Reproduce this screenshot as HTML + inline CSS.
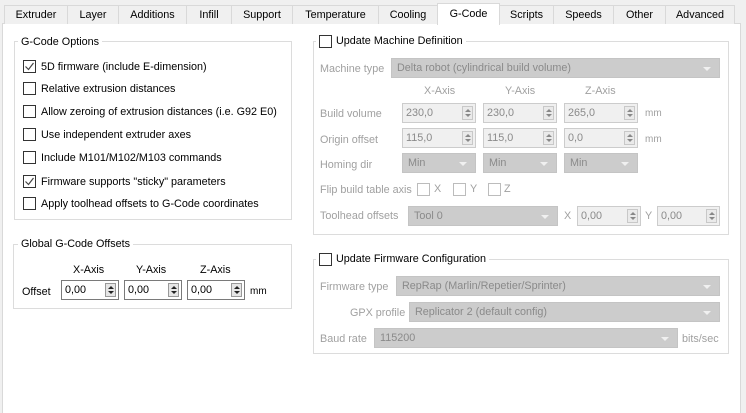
<!DOCTYPE html><html><head><style>
*{box-sizing:border-box}
html,body{margin:0;width:746px;height:413px;overflow:hidden}
body{background:#f0f0f0;font-family:"Liberation Sans",sans-serif;font-size:10.8px;color:#000;position:relative}
.a{position:absolute;white-space:nowrap;margin-top:2px}
.tab{position:absolute;top:5px;height:19px;border:1px solid #d9d9d9;border-bottom:none;background:#f0f0f0;text-align:center;line-height:19px}
.panel{position:absolute;left:2px;top:23px;width:739px;height:392px;background:#fff;border:1px solid #d9d9d9}
.grp{position:absolute;border:1px solid #dcdcdc}
.gt{position:absolute;background:#fff;padding:0 3px;line-height:16px}
.cb{position:absolute;width:13px;height:13px;border:1px solid #333;background:#fff}
.cbd{border-color:#bcbcbc}
.d{color:#a0a0a0}
.combo{position:absolute;height:20px;background:#cccccc;border:1px solid #c4c4c4;color:#8a8a8a;padding-left:5px;line-height:19px}
.combo:after{content:"";position:absolute;right:8px;top:8px;border-left:4px solid transparent;border-right:4px solid transparent;border-top:4px solid #f0f0f0}
.spin{position:absolute;height:20px;background:#f0f0f0;border:1px solid #ccc;color:#8a8a8a;padding-left:3px;line-height:19px}
.spin.e{background:#fff;border-color:#7a7a7a;color:#000}
.spin i{position:absolute;right:2px;top:2px;width:11px;height:14px;border:1px solid #c8c8c8;background:#eaeaea}
.spin.e i{border-color:#999;background:#e6e6e6}
.spin i:before{content:"";position:absolute;left:2px;top:2px;border-left:3px solid transparent;border-right:3px solid transparent;border-bottom:3px solid #888}
.spin i:after{content:"";position:absolute;left:2px;top:7px;border-left:3px solid transparent;border-right:3px solid transparent;border-top:3px solid #888}
.spin.e i:before{border-bottom-color:#222}.spin.e i:after{border-top-color:#222}
</style></head><body>
<div class="panel"></div>
<div class="tab" style="left:4px;width:64px">Extruder</div>
<div class="tab" style="left:67px;width:52px">Layer</div>
<div class="tab" style="left:118px;width:69px">Additions</div>
<div class="tab" style="left:186px;width:46px">Infill</div>
<div class="tab" style="left:231px;width:62px">Support</div>
<div class="tab" style="left:292px;width:87px">Temperature</div>
<div class="tab" style="left:378px;width:60px">Cooling</div>
<div class="tab" style="left:437px;top:3px;width:63px;height:22px;background:#fff;line-height:20px">G-Code</div>
<div class="tab" style="left:499px;width:55px">Scripts</div>
<div class="tab" style="left:553px;width:61px">Speeds</div>
<div class="tab" style="left:613px;width:53px">Other</div>
<div class="tab" style="left:665px;width:70px">Advanced</div>

<div class="grp" style="left:14px;top:41px;width:278px;height:179px"></div>
<div class="gt" style="left:18px;top:34px">G-Code Options</div>
<div class="cb" style="left:23px;top:60px"><svg width="11" height="11" style="position:absolute;left:0;top:0"><path d="M1.5 5.5 L4.5 8.5 L9.5 2" stroke="#444" stroke-width="1.2" fill="none"/></svg></div>
<div class="a" style="left:41px;top:59px">5D firmware (include E-dimension)</div>
<div class="cb" style="left:23px;top:82px"></div><div class="a" style="left:41px;top:81px">Relative extrusion distances</div>
<div class="cb" style="left:23px;top:105px"></div><div class="a" style="left:41px;top:104px">Allow zeroing of extrusion distances (i.e. G92 E0)</div>
<div class="cb" style="left:23px;top:128px"></div><div class="a" style="left:41px;top:127px">Use independent extruder axes</div>
<div class="cb" style="left:23px;top:151px"></div><div class="a" style="left:41px;top:150px">Include M101/M102/M103 commands</div>
<div class="cb" style="left:23px;top:175px"><svg width="11" height="11" style="position:absolute;left:0;top:0"><path d="M1.5 5.5 L4.5 8.5 L9.5 2" stroke="#444" stroke-width="1.2" fill="none"/></svg></div>
<div class="a" style="left:41px;top:174px">Firmware supports "sticky" parameters</div>
<div class="cb" style="left:23px;top:197px"></div><div class="a" style="left:41px;top:196px">Apply toolhead offsets to G-Code coordinates</div>

<div class="grp" style="left:13px;top:244px;width:279px;height:65px"></div>
<div class="gt" style="left:18px;top:236px">Global G-Code Offsets</div>
<div class="a" style="left:73px;top:262px">X-Axis</div>
<div class="a" style="left:136px;top:262px">Y-Axis</div>
<div class="a" style="left:200px;top:262px">Z-Axis</div>
<div class="a" style="left:22px;top:284px">Offset</div>
<div class="spin e" style="left:61px;top:280px;width:58px">0,00<i></i></div>
<div class="spin e" style="left:124px;top:280px;width:58px">0,00<i></i></div>
<div class="spin e" style="left:187px;top:280px;width:58px">0,00<i></i></div>
<div class="a" style="left:250px;top:284px;font-size:10px">mm</div>

<div class="grp" style="left:313px;top:41px;width:416px;height:194px"></div>
<div class="gt" style="left:316px;top:33px;padding-left:20px">Update Machine Definition</div>
<div class="cb" style="left:319px;top:35px"></div>
<div class="a d" style="left:320px;top:61px">Machine type</div>
<div class="combo" style="left:391px;top:58px;width:329px">Delta robot (cylindrical build volume)</div>
<div class="a d" style="left:424px;top:83px">X-Axis</div>
<div class="a d" style="left:505px;top:83px">Y-Axis</div>
<div class="a d" style="left:585px;top:83px">Z-Axis</div>
<div class="a d" style="left:320px;top:106px">Build volume</div>
<div class="spin" style="left:402px;top:103px;width:74px">230,0<i></i></div>
<div class="spin" style="left:483px;top:103px;width:74px">230,0<i></i></div>
<div class="spin" style="left:564px;top:103px;width:74px">265,0<i></i></div>
<div class="a d" style="left:645px;top:106px;font-size:10px">mm</div>
<div class="a d" style="left:320px;top:132px">Origin offset</div>
<div class="spin" style="left:402px;top:128px;width:74px">115,0<i></i></div>
<div class="spin" style="left:483px;top:128px;width:74px">115,0<i></i></div>
<div class="spin" style="left:564px;top:128px;width:74px">0,0<i></i></div>
<div class="a d" style="left:645px;top:132px;font-size:10px">mm</div>
<div class="a d" style="left:320px;top:157px">Homing dir</div>
<div class="combo" style="left:402px;top:153px;width:74px">Min</div>
<div class="combo" style="left:483px;top:153px;width:74px">Min</div>
<div class="combo" style="left:564px;top:153px;width:74px">Min</div>
<div class="a d" style="left:320px;top:182px">Flip build table axis</div>
<div class="cb cbd" style="left:417px;top:183px"></div><div class="a d" style="left:434px;top:181px">X</div>
<div class="cb cbd" style="left:453px;top:183px"></div><div class="a d" style="left:470px;top:181px">Y</div>
<div class="cb cbd" style="left:488px;top:183px"></div><div class="a d" style="left:504px;top:181px">Z</div>
<div class="a d" style="left:320px;top:208px">Toolhead offsets</div>
<div class="combo" style="left:408px;top:206px;width:150px">Tool 0</div>
<div class="a d" style="left:564px;top:208px">X</div>
<div class="spin" style="left:577px;top:206px;width:64px">0,00<i></i></div>
<div class="a d" style="left:645px;top:208px">Y</div>
<div class="spin" style="left:657px;top:206px;width:63px">0,00<i></i></div>

<div class="grp" style="left:313px;top:259px;width:416px;height:95px"></div>
<div class="gt" style="left:316px;top:251px;padding-left:20px">Update Firmware Configuration</div>
<div class="cb" style="left:319px;top:253px"></div>
<div class="a d" style="left:320px;top:279px">Firmware type</div>
<div class="combo" style="left:396px;top:276px;width:324px">RepRap (Marlin/Repetier/Sprinter)</div>
<div class="a d" style="left:350px;top:305px">GPX profile</div>
<div class="combo" style="left:409px;top:302px;width:311px">Replicator 2 (default config)</div>
<div class="a d" style="left:320px;top:331px">Baud rate</div>
<div class="combo" style="left:374px;top:328px;width:304px">115200</div>
<div class="a d" style="left:682px;top:331px">bits/sec</div>
</body></html>
